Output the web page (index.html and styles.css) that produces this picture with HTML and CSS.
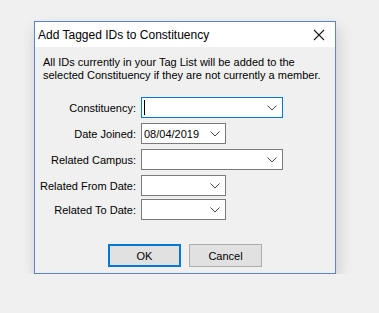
FILE: index.html
```html
<!DOCTYPE html>
<html lang="en">

<head>
    <meta charset="UTF-8">
    <title>Add Tagged IDs to Constituency</title>
    <link rel="stylesheet" href="styles.css">
</head>

<body>

    <div class="dialog">
        <div class="titlebar">
            <span class="title">Add Tagged IDs to Constituency</span>
            <svg class="close" width="12" height="12" viewBox="0 0 12 12">
                <path d="M1 1 L11 11 M11 1 L1 11" stroke="#1a1a1a" stroke-width="1.1" fill="none" />
            </svg>
        </div>

        <div class="content">
            <p class="intro">All IDs currently in your Tag List will be added to the<br>selected Constituency if they are not currently a member.</p>

            <!-- form rows -->
            <div class="form">
                <div class="row">
                    <label>Constituency:</label>
                    <div class="combo wide focused"><span class="caret"></span><svg class="chev" width="10" height="6" viewBox="0 0 10 6"><path d="M0.5 0.5 L5 5 L9.5 0.5" stroke="#444" fill="none" /></svg></div>
                </div>
                <div class="row">
                    <label>Date Joined:</label>
                    <div class="combo narrow"><span class="val">08/04/2019</span><svg class="chev" width="10" height="6" viewBox="0 0 10 6"><path d="M0.5 0.5 L5 5 L9.5 0.5" stroke="#444" fill="none" /></svg></div>
                </div>
                <div class="row">
                    <label>Related Campus:</label>
                    <div class="combo wide"><svg class="chev" width="10" height="6" viewBox="0 0 10 6"><path d="M0.5 0.5 L5 5 L9.5 0.5" stroke="#444" fill="none" /></svg></div>
                </div>
                <div class="row tight">
                    <label>Related From Date:</label>
                    <div class="combo narrow"><svg class="chev" width="10" height="6" viewBox="0 0 10 6"><path d="M0.5 0.5 L5 5 L9.5 0.5" stroke="#444" fill="none" /></svg></div>
                </div>
                <div class="row tight">
                    <label>Related To Date:</label>
                    <div class="combo narrow"><svg class="chev" width="10" height="6" viewBox="0 0 10 6"><path d="M0.5 0.5 L5 5 L9.5 0.5" stroke="#444" fill="none" /></svg></div>
                </div>
            </div>

            <div class="buttons">
                <button class="btn default">OK</button>
                <button class="btn">Cancel</button>
            </div>
        </div>
    </div>

</body>

</html>
```

FILE: styles.css
```css
body {
    margin: 0;
    padding: 21px 0 0 34px;
    background-color: #f0f0f0;
    font-family: "Liberation Sans", Arial, sans-serif;
    font-size: 11px;
    color: #000;
}

.dialog {
    width: 300px;
    height: 251px;
    border: 1px solid #5b86cb;
    background-color: #f0f0f0;
    box-shadow: 2px 7px 14px rgba(0, 0, 0, 0.16);
    display: flex;
    flex-direction: column;
}

.titlebar {
    height: 25px;
    flex-shrink: 0;
    background-color: #fff;
    display: flex;
    align-items: center;
    justify-content: space-between;
    padding: 0 10px 0 3px;
}

.title {
    font-size: 12px;
}

.content {
    padding: 9px 0 0 8px;
}

.intro {
    margin: 0;
    white-space: nowrap;
    line-height: 13px;
}

/* label column ends at x=136, fields start at x=141 */
.form {
    margin-top: 15px;
}

.row {
    display: flex;
    align-items: center;
    margin-bottom: 5px;
}

.row.tight {
    margin-bottom: 3px;
}

.row label {
    width: 93px;
    text-align: right;
    margin-right: 5px;
    white-space: nowrap;
    display: flex;
    justify-content: flex-end;
}

.combo {
    height: 19px;
    border: 1px solid #7a7a7a;
    background-color: #fff;
    position: relative;
    display: flex;
    align-items: center;
    box-sizing: content-box;
}

.combo.wide {
    width: 140px;
}

.combo.narrow {
    width: 83px;
}

.combo.focused {
    border-color: #0078d7;
}

.caret {
    width: 1px;
    height: 15px;
    background-color: #000;
    margin-left: 2px;
}

.val {
    margin-left: 2px;
}

.chev {
    position: absolute;
    right: 5px;
    top: 7px;
}

.buttons {
    display: flex;
    gap: 8px;
    margin-top: 24px;
    padding-left: 65px;
}

.btn {
    width: 73px;
    height: 23px;
    background-color: #e1e1e1;
    border: 1px solid #adadad;
    font-family: "Liberation Sans", Arial, sans-serif;
    font-size: 11px;
    padding: 0;
    color: #000;
}

.btn.default {
    border: 2px solid #0078d7;
}
```
